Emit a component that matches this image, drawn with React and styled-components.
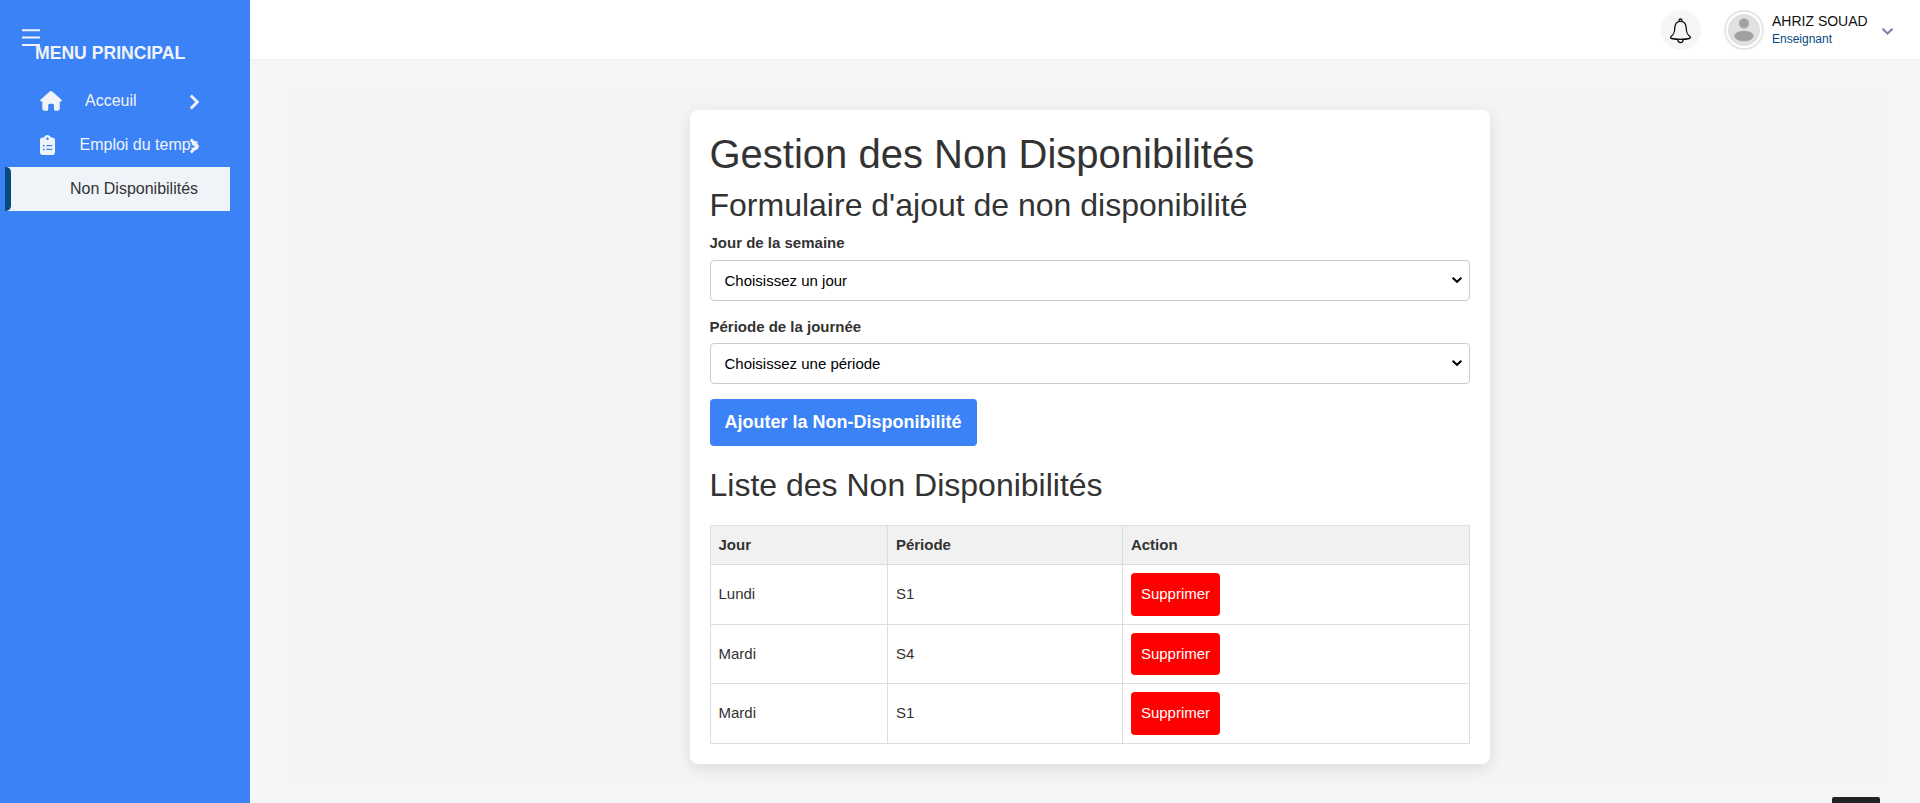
import React from "react";
import styled, { createGlobalStyle } from "styled-components";
import { FaClipboardList } from "react-icons/fa6";

const GlobalStyle = createGlobalStyle`
  *, *::before, *::after { box-sizing: border-box; }
  body {
    margin: 0;
    height: 100vh;
    overflow: hidden;
    background: #f6f6f9;
    color: #333;
    font: 16px/1.5 "Liberation Sans", Arial, sans-serif;
  }
`;

const Page = styled.div`
  display: flex;
  height: 100vh;
`;

const Sidebar = styled.aside`
  position: relative;
  flex: 0 0 250px;
  padding: 39px 20px 0 5px;
  background: #3b82f6;
  color: #f0f4f9;
`;

const MenuToggle = styled.svg`
  position: absolute;
  left: 21px;
  top: 28px;
`;

const MenuTitle = styled.div`
  padding-left: 30px;
  margin-bottom: 12px;
  font-size: 17.6px;
  line-height: 28px;
  font-weight: 700;
`;

const NavItem = styled.a`
  display: flex;
  align-items: center;
  height: 44px;
  padding: 0 30px 0 35px;
  white-space: nowrap;
`;

const NavIcon = styled.span`
  display: flex;
  flex: 0 0 ${(p) => p.$width}px;
  min-width: 0;

  > svg { flex: none; width: ${(p) => p.$width}px; }
`;

const NavLabel = styled.span`
  flex: 1;
  width: 0;
  margin-left: ${(p) => p.$gap}px;
`;

const NavChevron = styled.svg`
  flex: none;
  margin-top: 2px;
`;

const SubItem = styled.a`
  display: flex;
  align-items: center;
  height: 44px;
  background: #f0f4f9;
  color: #333;

  &::before {
    content: "";
    width: 6px;
    height: 100%;
    margin-right: 59px;
    border-radius: 0 5px 5px 0;
    background: #064a7f;
  }
`;

const Content = styled.div`
  flex: 1;
  display: flex;
  flex-direction: column;
`;

const Topbar = styled.header`
  display: flex;
  align-items: center;
  justify-content: flex-end;
  height: 60px;
  padding-right: 26px;
  background: #fff;
  border-bottom: 1px solid #f0f0f2;
`;

const BellButton = styled.button`
  display: grid;
  place-items: center;
  width: 40px;
  height: 40px;
  margin: 1px 23px 0 0;
  padding: 1px 0 0;
  border: 0;
  border-radius: 50%;
  background: #f6f6f9;
`;

const Avatar = styled.svg`
  margin: 1px 8px 0 0;
`;

const Identity = styled.div`
  width: 96px;
  margin: 0 13px 0 0;
  white-space: nowrap;
`;

const UserName = styled.div`
  color: #111;
  font-size: 14px;
  line-height: 20px;
`;

const UserRole = styled.div`
  color: #064a7f;
  font-size: 12px;
  line-height: 17px;
`;

const UserChevron = styled.svg`
  margin-top: 4px;
`;

const Panel = styled.main`
  display: flex;
  justify-content: center;
  align-items: flex-start;
  height: 694px;
  margin: 30px 30px 0 39px;
  padding-top: 20px;
  background: #f4f4f4;
`;

const Card = styled.section`
  width: 800px;
  height: 654px;
  padding: 20px;
  border-radius: 8px;
  background: #fff;
  box-shadow: 0 4px 15px rgba(0, 0, 0, 0.1);
  font-size: 15px;
`;

const Title = styled.h1`
  margin: 0 0 8px;
  font-size: 40px;
  font-weight: 400;
  line-height: 1.2;
`;

const Subtitle = styled.h2`
  margin: 0 0 8px;
  font-size: 32px;
  font-weight: 400;
  line-height: 1.2;
`;

const Field = styled.div`
  display: flex;
  flex-direction: column;
  margin-bottom: 15px;
`;

const Label = styled.label`
  margin-bottom: 5px;
  font-weight: 700;
`;

const SelectBox = styled.div`
  display: grid;
  align-items: center;

  > * { grid-area: 1 / 1; }
  > svg { justify-self: end; margin: 0 7px 1px 0; pointer-events: none; }
`;

const SelectInput = styled.select`
  appearance: none;
  width: 100%;
  height: 41px;
  padding: 10px 14px;
  border: 1px solid #ccc;
  border-radius: 4px;
  background: #fff;
  color: #000;
  font: 15px "Liberation Sans", Arial, sans-serif;
`;

const SubmitButton = styled.button`
  display: block;
  margin-bottom: 20px;
  padding: 10px 15px;
  border: 0;
  border-radius: 4px;
  background: #3b82f6;
  color: #fff;
  font: 700 18px/27px "Liberation Sans", Arial, sans-serif;
`;

const Table = styled.table`
  width: 100%;
  margin-top: 20px;
  border-collapse: collapse;
`;

const cell = `
  padding: 8px;
  border: 1px solid #ddd;
  text-align: left;
`;

const HeadCell = styled.th`
  ${cell}
  width: ${(p) => p.$width};
  background: #f1f1f1;
`;

const Cell = styled.td`
  ${cell}
`;

const DeleteButton = styled.button`
  display: block;
  padding: 10px;
  border: 0;
  border-radius: 4px;
  background: #f00;
  color: #fff;
  font: 15px/22.5px "Liberation Sans", Arial, sans-serif;
`;

const ChatTab = styled.div`
  position: fixed;
  right: 40px;
  bottom: 0;
  width: 48px;
  height: 6px;
  border-radius: 2px 2px 0 0;
  background: #222;
`;

const Chevron = () => (
  <NavChevron width="11" height="16" viewBox="0 0 11 16" fill="none" stroke="currentColor" strokeWidth="2.9">
    <path d="M1.8 1.5 L8.3 8 L1.8 14.5" />
  </NavChevron>
);

const HouseIcon = () => (
  <svg width="22" height="20" viewBox="0 0 22 20" fill="currentColor">
    <path d="M9.8 0.5Q11 -0.4 12.2 0.5L21.3 8.4Q22.4 9.8 21 10.6H19.8V17.6Q19.8 19.8 17.6 19.8H15.4Q14 19.8 14 18.4V14.5Q14 12.8 12.4 12.8H9.8Q8.2 12.8 8.2 14.5V18.4Q8.2 19.8 6.8 19.8H4.5Q2.3 19.8 2.3 17.6V10.6H1Q-0.4 9.8 0.7 8.4Z" />
  </svg>
);

const SelectField = ({ id, label, placeholder }) => (
  <Field>
    <Label htmlFor={id}>{label}</Label>
    <SelectBox>
      <SelectInput id={id}>
        <option>{placeholder}</option>
      </SelectInput>
      <svg width="12" height="8" viewBox="0 0 12 8" fill="none" stroke="#000" strokeWidth="2">
        <path d="M1.6 1.8L6 5.8L10.4 1.8" />
      </svg>
    </SelectBox>
  </Field>
);

const rows = [
  ["Lundi", "S1"],
  ["Mardi", "S4"],
  ["Mardi", "S1"],
];

export default function App() {
  return (
    <Page>
      <GlobalStyle />
      <Sidebar>
        <MenuToggle width="20" height="19" viewBox="0 0 20 19" stroke="currentColor" strokeWidth="2">
          <path d="M1 2.3h18M1 9.6h18M1 17h18" />
        </MenuToggle>
        <MenuTitle>MENU PRINCIPAL</MenuTitle>
        <NavItem>
          <NavIcon $width={22}>
            <HouseIcon />
          </NavIcon>
          <NavLabel $gap={23}>Acceuil</NavLabel>
          <Chevron />
        </NavItem>
        <NavItem>
          <NavIcon $width={15}>
            <FaClipboardList size={20} />
          </NavIcon>
          <NavLabel $gap={24.5}>Emploi du temps</NavLabel>
          <Chevron />
        </NavItem>
        <SubItem>Non Disponibilités</SubItem>
      </Sidebar>
      <Content>
        <Topbar>
          <BellButton>
            <svg width="22" height="26" viewBox="0 0 22 26" fill="none" stroke="#111" strokeWidth="1.3">
              <path d="M10.5 3.4C6.6 3.4 5 6.4 4.8 10C4.6 15 3.8 16.4 1.2 18.4C0.2 19.4 0.4 20.2 1.6 20.5C6 21.6 15 21.6 19.4 20.5C20.6 20.2 20.8 19.4 19.8 18.4C17.2 16.4 16.4 15 16.2 10C16 6.4 14.4 3.4 10.5 3.4Z" />
              <path d="M9 3.5V2.5Q9.1 1 10.5 1T12 2.5V3.5M7.8 21.3C7.8 25.6 13.2 25.6 13.2 21.3" />
            </svg>
          </BellButton>
          <Avatar width="40" height="40" viewBox="0 0 40 40">
            <circle cx="20" cy="20" r="19" fill="#fff" stroke="#e7e7e7" strokeWidth="2" />
            <circle cx="20" cy="20" r="16" fill="#e0e0e0" />
            <circle cx="20" cy="13.5" r="5" fill="#a1a1a1" />
            <ellipse cx="20" cy="26" rx="9.7" ry="5.2" fill="#a1a1a1" />
          </Avatar>
          <Identity>
            <UserName>AHRIZ SOUAD</UserName>
            <UserRole>Enseignant</UserRole>
          </Identity>
          <UserChevron width="13" height="9" viewBox="0 0 13 9" fill="none" stroke="#7c85ab" strokeWidth="2.2">
            <path d="M1.5 1.7L6.5 6.5L11.5 1.7" />
          </UserChevron>
        </Topbar>
        <Panel>
          <Card>
            <Title>Gestion des Non Disponibilités</Title>
            <Subtitle>Formulaire d'ajout de non disponibilité</Subtitle>
            <SelectField id="jour" label="Jour de la semaine" placeholder="Choisissez un jour" />
            <SelectField id="periode" label="Période de la journée" placeholder="Choisissez une période" />
            <SubmitButton>Ajouter la Non-Disponibilité</SubmitButton>
            <Subtitle>Liste des Non Disponibilités</Subtitle>
            <Table>
              <thead>
                <tr>
                  <HeadCell $width="177.4px">Jour</HeadCell>
                  <HeadCell $width="235px">Période</HeadCell>
                  <HeadCell>Action</HeadCell>
                </tr>
              </thead>
              <tbody>
                {rows.map(([day, period]) => (
                  <tr key={day + period}>
                    <Cell>{day}</Cell>
                    <Cell>{period}</Cell>
                    <Cell>
                      <DeleteButton>Supprimer</DeleteButton>
                    </Cell>
                  </tr>
                ))}
              </tbody>
            </Table>
          </Card>
        </Panel>
      </Content>
      <ChatTab />
    </Page>
  );
}
